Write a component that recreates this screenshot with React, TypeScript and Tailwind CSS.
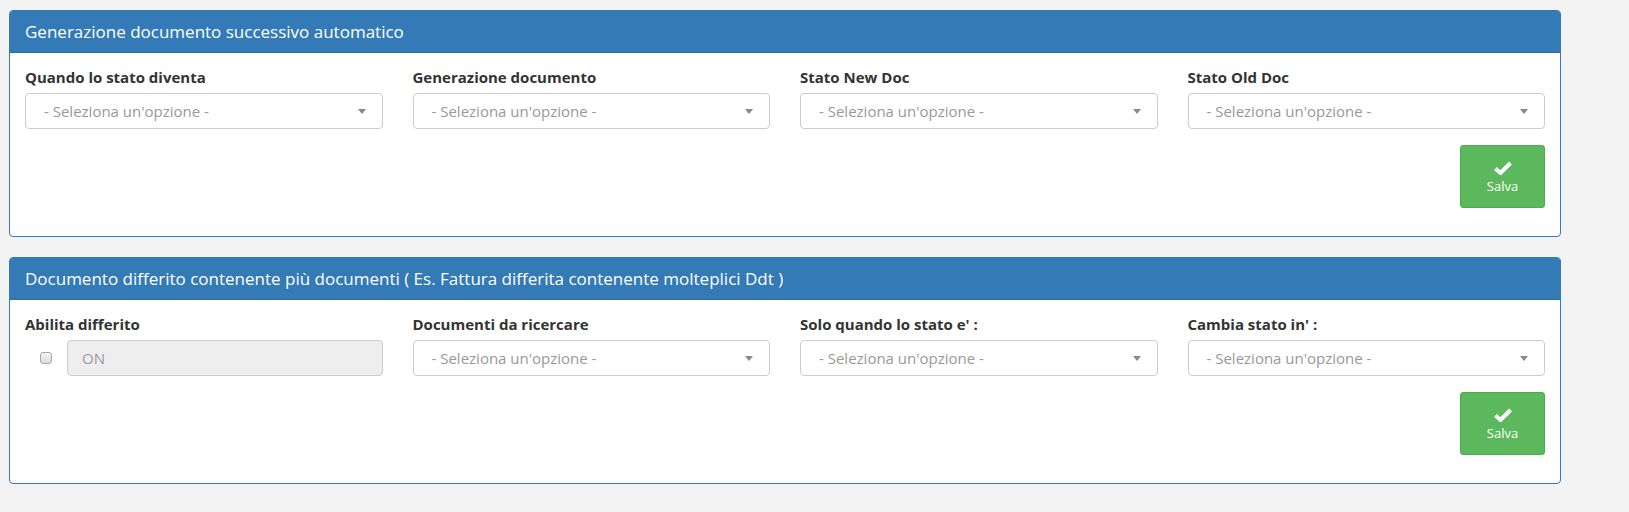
const font = { fontFamily: '"Open Sans", "Liberation Sans", sans-serif' };

function Select() {
  return (
    <div className="relative h-[36px] w-full rounded-[4px] border border-[#cccccc] bg-white">
      <span className="absolute left-[18px] top-[6px] text-[15px] text-[#999999]">
        - Seleziona un'opzione -
      </span>
      <span className="absolute right-[16px] top-[15px] h-0 w-0 border-x-[4px] border-t-[5px] border-x-transparent border-t-[#888888]" />
    </div>
  );
}

function Field({ label, children }: { label: string; children?: React.ReactNode }) {
  return (
    <div className="px-[15px]">
      <div className="mb-[6px] h-[20px] text-[15px] font-bold leading-[20px] text-[#333333]">
        {label}
      </div>
      {children ?? <Select />}
    </div>
  );
}

function SaveButton() {
  return (
    <div className="flex justify-end px-[15px] pt-[16px]">
      <button
        type="button"
        className="flex h-[63px] w-[85px] flex-col items-center justify-center rounded-[3px] border border-[#4cae4c] bg-[#5cb85c] text-white"
      >
        <svg width="18" height="14" viewBox="0 0 18 14" className="mt-[2px]">
          <path d="M1.5 7.5 L6.5 12 L16.5 2" fill="none" stroke="white" strokeWidth="4" strokeLinejoin="miter" />
        </svg>
        <span className="mt-[4px] text-[13px] leading-[15px]">Salva</span>
      </button>
    </div>
  );
}

function Panel({ title, children }: { title: string; children: React.ReactNode }) {
  return (
    <div className="overflow-hidden rounded-[4px] border border-[#337ab7] bg-white">
      <div className="flex h-[42px] items-center border-b border-[#2e6da4] bg-[#337ab7] px-[15px] text-[17px] text-white">
        {title}
      </div>
      <div className="pb-[28px] pt-[14px]">{children}</div>
    </div>
  );
}

export default function App() {
  return (
    <div className="min-h-[512px] bg-[#f3f3f3] pl-[9px] pr-[68px] pt-[10px]" style={font}>
      <Panel title="Generazione documento successivo automatico">
        <div className="grid grid-cols-4">
          <Field label="Quando lo stato diventa" />
          <Field label="Generazione documento" />
          <Field label="Stato New Doc" />
          <Field label="Stato Old Doc" />
        </div>
        <SaveButton />
      </Panel>
      <div className="h-[20px]" />
      <Panel title="Documento differito contenente più documenti ( Es. Fattura differita contenente molteplici Ddt )">
        <div className="grid grid-cols-4">
          <Field label="Abilita differito">
            <div className="flex items-center">
              <div className="flex w-[42px] justify-center">
                <span className="block h-[12px] w-[12px] rounded-[3px] border border-[#a8a8a8] bg-gradient-to-b from-[#f4f4f4] to-[#dcdcdc]" />
              </div>
              <div className="flex h-[36px] flex-1 items-center rounded-[4px] border border-[#cccccc] bg-[#eeeeee] px-[14px] text-[15px] text-[#999999]">
                ON
              </div>
            </div>
          </Field>
          <Field label="Documenti da ricercare" />
          <Field label="Solo quando lo stato e' :" />
          <Field label="Cambia stato in' :" />
        </div>
        <SaveButton />
      </Panel>
    </div>
  );
}
